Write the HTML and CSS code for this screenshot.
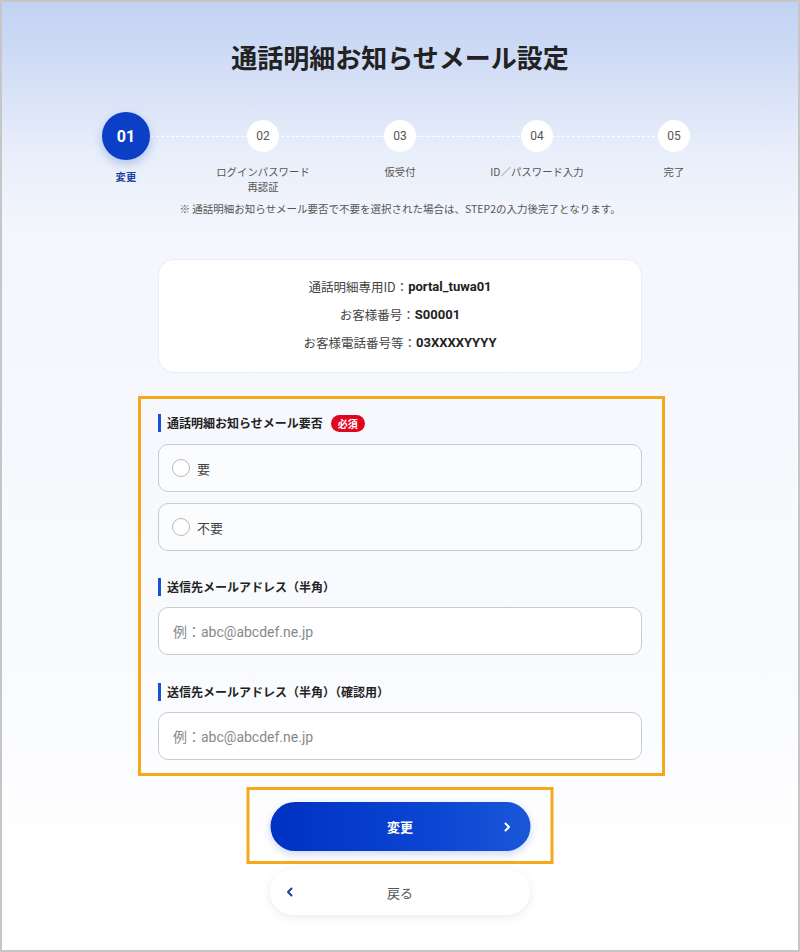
FILE: index.html
```html
<!DOCTYPE html>
<html lang="ja">
<head>
<meta charset="utf-8">
<title>通話明細お知らせメール設定</title>
<link rel="stylesheet" href="styles.css">
</head>
<body>
<div class="frame">
  <h1 class="title">通話明細お知らせメール設定</h1>

  <ol class="steps">
    <li class="step is-active">
      <div class="step-dot-wrap"><span class="step-dot">01</span></div>
      <span class="step-label">変更</span>
    </li>
    <li class="step">
      <div class="step-dot-wrap"><span class="step-dot">02</span></div>
      <span class="step-label">ログインパスワード<br>再認証</span>
    </li>
    <li class="step">
      <div class="step-dot-wrap"><span class="step-dot">03</span></div>
      <span class="step-label">仮受付</span>
    </li>
    <li class="step">
      <div class="step-dot-wrap"><span class="step-dot">04</span></div>
      <span class="step-label">ID／パスワード入力</span>
    </li>
    <li class="step">
      <div class="step-dot-wrap"><span class="step-dot">05</span></div>
      <span class="step-label">完了</span>
    </li>
  </ol>
  <p class="step-note">※ 通話明細お知らせメール要否で不要を選択された場合は、STEP2の入力後完了となります。</p>

  <div class="content">
    <div class="info-card">
      <p class="info-row"><span class="info-key">通話明細専用ID：</span><span class="info-val">portal_tuwa01</span></p>
      <p class="info-row"><span class="info-key">お客様番号：</span><span class="info-val">S00001</span></p>
      <p class="info-row"><span class="info-key">お客様電話番号等：</span><span class="info-val">03XXXXYYYY</span></p>
    </div>

    <div class="form-highlight">
      <div class="field">
        <div class="field-label">通話明細お知らせメール要否<span class="badge">必須</span></div>
        <label class="option"><span class="radio"></span><span class="option-text">要</span></label>
        <label class="option option-2"><span class="radio"></span><span class="option-text">不要</span></label>
      </div>
      <div class="field field-mail">
        <div class="field-label">送信先メールアドレス（半角）</div>
        <div class="input"><span class="placeholder">例：abc@abcdef.ne.jp</span></div>
      </div>
      <div class="field field-mail">
        <div class="field-label">送信先メールアドレス（半角）（確認用）</div>
        <div class="input"><span class="placeholder">例：abc@abcdef.ne.jp</span></div>
      </div>
    </div>

    <div class="btn-highlight">
      <button class="btn btn-primary" type="button">
        <span class="btn-text">変更</span>
        <svg class="chev chev-right" width="10" height="12" viewBox="0 0 10 12"><path d="M3 2.5 L6.5 6 L3 9.5" fill="none" stroke="#fff" stroke-width="2" stroke-linecap="round" stroke-linejoin="round"/></svg>
      </button>
    </div>
    <button class="btn btn-back" type="button">
      <svg class="chev chev-left" width="10" height="12" viewBox="0 0 10 12"><path d="M6.5 2.5 L3 6 L6.5 9.5" fill="none" stroke="#1a3f9e" stroke-width="2" stroke-linecap="round" stroke-linejoin="round"/></svg>
      <span class="btn-text">戻る</span>
    </button>
  </div>
</div>
</body>
</html>
```

FILE: styles.css
```css
* { box-sizing: border-box; }
html, body { margin: 0; padding: 0; }
body {
  font-family: "Noto Sans CJK JP", "Noto Sans", sans-serif;
  color: #333;
}
.frame {
  width: 800px;
  height: 952px;
  border: 2px solid #c6c6c6;
  background: linear-gradient(180deg, #c2d2f2 0px, #d3def6 70px, #e8eefa 150px, #f4f6fc 230px, #f7f8fd 420px, #fafbfe 700px, #ffffff 860px);
  padding-top: 37px;
  overflow: hidden;
}
.title {
  margin: 0;
  text-align: center;
  font-size: 26px;
  line-height: 36px;
  font-weight: 700;
  color: #222;
  letter-spacing: 0;
}

.steps {
  list-style: none;
  margin: 37px auto 0;
  padding: 0;
  width: 685px;
  display: flex;
  position: relative;
}
.steps::before {
  content: "";
  position: absolute;
  left: 68px;
  right: 68px;
  top: 24px;
  border-top: 1px dashed #ffffff;
}
.step {
  width: 137px;
  display: flex;
  flex-direction: column;
  align-items: center;
  position: relative;
}
.step-dot-wrap {
  height: 48px;
  display: flex;
  align-items: center;
  justify-content: center;
}
.step-dot {
  width: 32px;
  height: 32px;
  border-radius: 50%;
  background: #fff;
  color: #555;
  font-size: 12px;
  display: flex;
  align-items: center;
  justify-content: center;
  font-family: Roboto, "Noto Sans", sans-serif;
}
.step.is-active .step-dot {
  width: 48px;
  height: 48px;
  background: #0a3fc6;
  color: #fff;
  font-size: 16px;
  font-weight: 700;
  box-shadow: 0 4px 10px rgba(10, 63, 198, 0.25);
}
.step-label {
  margin-top: 4px;
  font-size: 10.3px;
  line-height: 15px;
  color: #555;
  text-align: center;
  letter-spacing: 0.1px;
}
.step.is-active .step-label {
  margin-top: 9px;
  color: #1a3d9c;
  font-weight: 700;
}
.step-note {
  margin: 7px 0 0;
  text-align: center;
  font-size: 10.5px;
  line-height: 16px;
  color: #555;
}

.content {
  width: 484px;
  margin: 42px auto 0;
}
.info-card {
  background: #fff;
  border: 1px solid #e9edf6;
  border-radius: 16px;
  padding: 13px 0 15px;
}
.info-row {
  margin: 0;
  height: 28px;
  display: flex;
  align-items: center;
  justify-content: center;
  font-size: 12.5px;
  line-height: 16px;
}
.info-key { color: #444; }
.info-val { color: #222; font-weight: 700; font-size: 13px; font-family: Roboto, "Noto Sans", sans-serif; }

.form-highlight {
  margin: 23px 0 0 -20px;
  width: 527px;
  border: 3px solid #f5a81c;
  padding: 15px 20px 13px 17px;
}
.field-mail { margin-top: 27px; }
.field-mail + .field-mail { margin-top: 28px; }
.field-label {
  display: flex;
  align-items: center;
  height: 18px;
  font-size: 12px;
  font-weight: 700;
  color: #222;
  border-left: 3px solid #1652d2;
  padding-left: 6px;
  line-height: 14px;
}
.badge {
  margin-left: 8px;
  background: #e0061f;
  color: #fff;
  font-size: 10px;
  font-weight: 700;
  height: 17px;
  line-height: 17px;
  padding: 0 7px;
  border-radius: 9px;
}
.option {
  display: flex;
  align-items: center;
  height: 48px;
  margin-top: 12px;
  border: 1px solid #c9cad2;
  border-radius: 10px;
  background: #fbfcfe;
  padding-left: 13px;
}
.option-2 { margin-top: 11px; }
.radio {
  width: 18px;
  height: 18px;
  border-radius: 50%;
  border: 1px solid #b9b9c0;
  background: #fff;
}
.option-text {
  margin-left: 7px;
  font-size: 13px;
  color: #444;
}
.input {
  display: flex;
  align-items: center;
  height: 48px;
  margin-top: 11px;
  border: 1px solid #c9cad2;
  border-radius: 10px;
  background: #fff;
  padding-left: 14px;
}
.placeholder {
  font-size: 14px;
  color: #888;
  font-family: Roboto, "Noto Sans CJK JP", sans-serif;
}

.btn-highlight {
  width: 307px;
  margin: 11px auto 0;
  border: 3px solid #f5a81c;
  padding: 12px 20px 10px 21px;
  transform: translateX(-0.5px);
}
.btn {
  display: flex;
  align-items: center;
  width: 260px;
  border: none;
  border-radius: 25px;
  font-family: "Noto Sans CJK JP", sans-serif;
  position: relative;
  cursor: pointer;
  padding: 0;
}
.btn-primary {
  height: 49px;
  background: linear-gradient(90deg, #0031c2 0%, #0a45d2 60%, #1a57d8 100%);
  color: #fff;
  box-shadow: 0 3px 8px rgba(0, 49, 194, 0.2);
}
.btn-primary .btn-text {
  flex: 1;
  text-align: center;
  font-size: 13px;
  font-weight: 700;
  padding-left: 28px;
}
.chev-right { margin-right: 18px; }
.btn-back {
  height: 46px;
  margin: 5px auto 0;
  background: #fff;
  color: #555;
  box-shadow: 0 2px 8px rgba(30, 50, 110, 0.1);
}
.chev-left { margin-left: 15px; }
.btn-back .btn-text {
  flex: 1;
  text-align: center;
  font-size: 13px;
  padding-right: 25px;
}
```
